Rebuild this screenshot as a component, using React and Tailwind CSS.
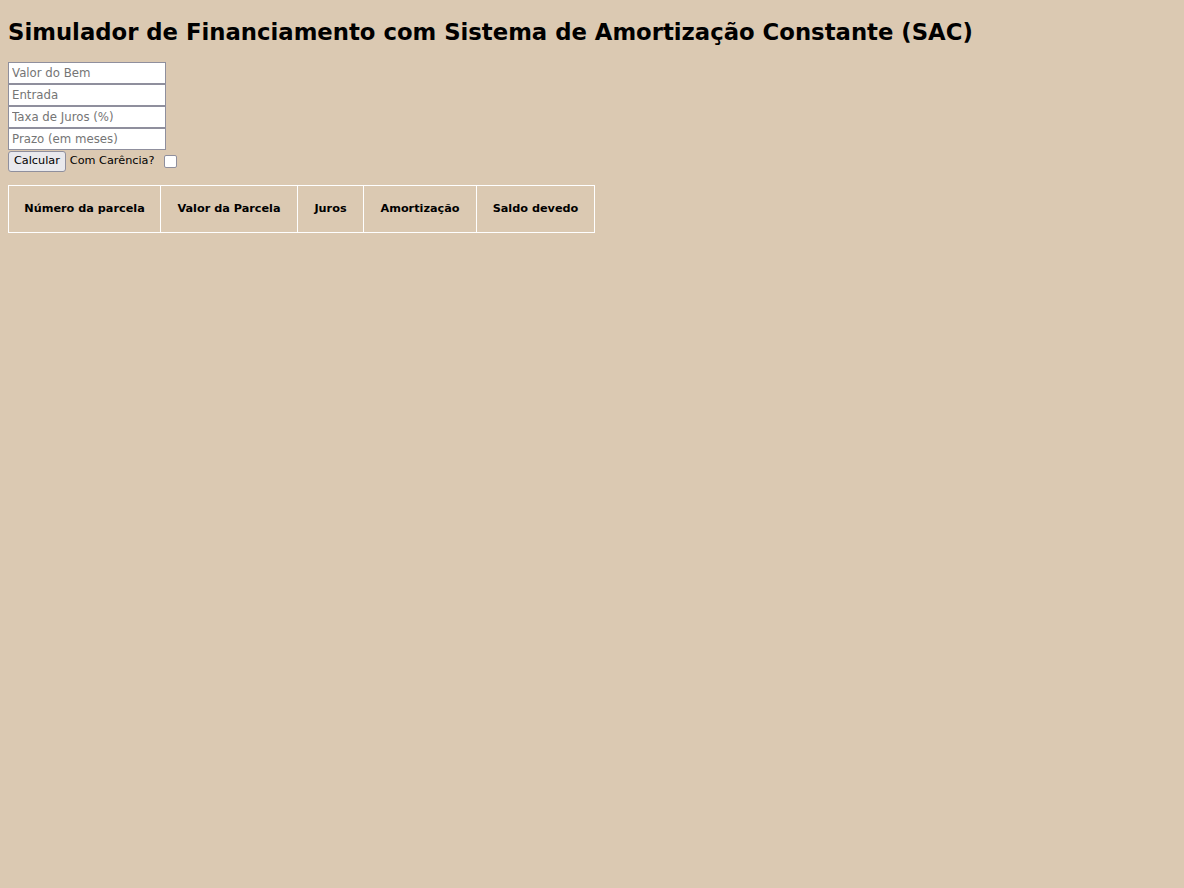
export default function App() {
  const headers = [
    { label: "Número da parcela", w: "w-[152px]" },
    { label: "Valor da Parcela", w: "w-[137px]" },
    { label: "Juros", w: "w-[66px]" },
    { label: "Amortização", w: "w-[113px]" },
    { label: "Saldo devedo", w: "w-[118px]" },
  ];

  return (
    <div className="min-h-screen bg-[#dbc9b2] text-black p-2" style={{ fontFamily: '"DejaVu Sans", Verdana, sans-serif' }}>
      <h1 className="text-[22.75px] font-bold leading-[28px] mt-[10px] mb-[16px]">
        Simulador de Financiamento com Sistema de Amortização Constante (SAC)
      </h1>

      <div className="flex flex-col items-start">
        {["Valor do Bem", "Entrada", "Taxa de Juros (%)", "Prazo (em meses)"].map((p) => (
          <input
            key={p}
            type="text"
            placeholder={p}
            className="w-[158px] h-[22px] border border-[#8f8f9d] bg-white px-[3px] text-[11.75px] placeholder:text-[#757575] outline-none"
          />
        ))}
        <div className="flex items-center h-[22px] text-[11.25px]">
          <button className="h-[21px] px-[5px] bg-[#e9e9ed] border border-[#8f8f9d] rounded-[3px] text-[11.25px]">
            Calcular
          </button>
          <span className="ml-[4px]">Com Carência?</span>
          <span className="ml-[10px] w-[13px] h-[13px] border border-[#8f8f9d] rounded-[2px] bg-white" />
        </div>
      </div>

      <table className="mt-[13px] border-collapse border border-white text-[11.25px]">
        <thead>
          <tr>
            {headers.map((h) => (
              <th key={h.label} className={`${h.w} border border-white px-[15px] py-[15px] leading-[16px] font-bold`}>
                {h.label}
              </th>
            ))}
          </tr>
        </thead>
      </table>
    </div>
  );
}
